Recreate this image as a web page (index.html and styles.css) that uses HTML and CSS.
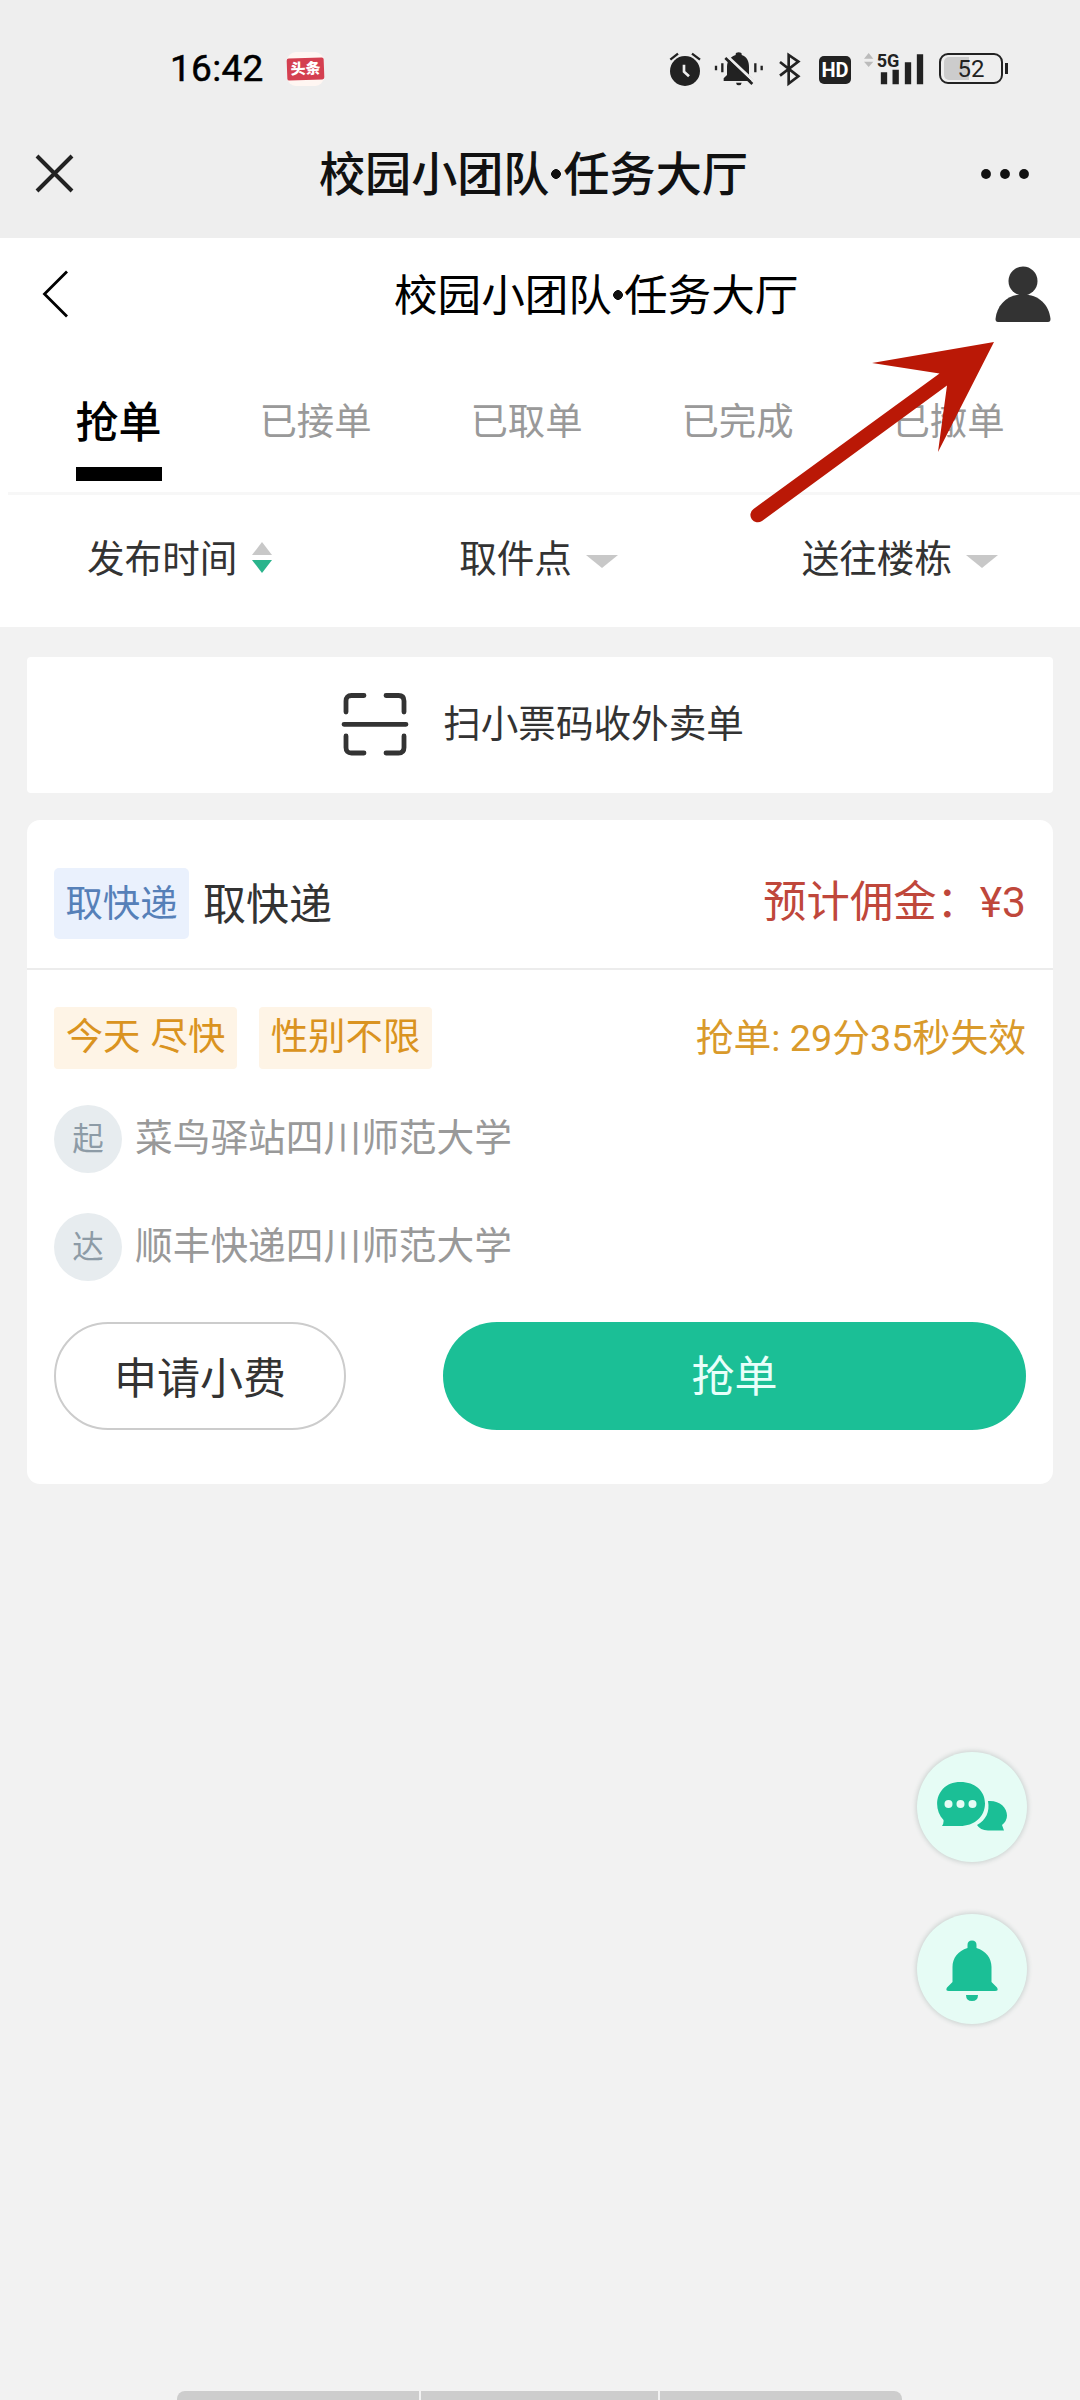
FILE: index.html
```html
<!DOCTYPE html>
<html lang="zh-CN">
<head>
<meta charset="utf-8">
<title>校园小团队•任务大厅</title>
<link rel="stylesheet" href="styles.css">
</head>
<body>
<div class="screen">
  <header class="host">
    <div class="status">
      <span class="clock">16:42</span>
      <span class="app-badge"><span class="app-badge-label">头条</span></span>
      <div class="status-icons">
        <svg class="i-alarm" width="34" height="36" viewBox="84 62 102 108">
          <circle cx="135" cy="122" r="45" fill="#222"/>
          <path d="M91 88 L114 70 M156 70 L180 88" stroke="#222" stroke-width="7" fill="none"/>
          <path d="M132 103 V124 L147 138" stroke="#eee" stroke-width="8" fill="none"/>
        </svg>
        <svg class="i-mute" width="50" height="36" viewBox="222 62 150 108">
          <path d="M228 106v14M247 99v27M346 99v27M365 106v14" stroke="#222" stroke-width="7"/>
          <path d="M251 152 v-8 l10-10 v-24 c0-18 10-31 26-36 v-3 q0-5 9-5 t9 5 v3 c16 5 22 19 22 36 v24 l14 14 v4z" fill="#222"/>
          <path d="M288 157h17q-1 8-8.500 8t-8.500-8z" fill="#222"/>
          <path d="M261 77 L345 156" stroke="#eee" stroke-width="9"/>
          <path d="M256 83 L337 161" stroke="#222" stroke-width="8"/>
        </svg>
        <svg class="i-bt" width="24" height="36" viewBox="413 62 72 108">
          <path d="M419 95 L474 138 L445 160 V74 L474 94 L419 136" stroke="#222" stroke-width="8" fill="none"/>
        </svg>
        <span class="hd">HD</span>
        <svg class="i-signal" width="62" height="36" viewBox="668 62 186 108">
          <path d="M671 85 L685 68 L699 85z M671 94 L685 110 L699 94z" fill="#bbb"/>
          <path d="M731 126v36M766 118v44M803 96v66M839 72v90" stroke="#222" stroke-width="19"/>
          <text x="709" y="110" class="net" textLength="68" lengthAdjust="spacingAndGlyphs">5G</text>
        </svg>
        <span class="battery"><span class="battery-fill"></span><span class="battery-num">52</span></span>
      </div>
    </div>
    <div class="host-bar">
      <svg class="close" width="41" height="41" viewBox="0 0 41 41"><path d="M3 3 L38 38 M38 3 L3 38" stroke="#222" stroke-width="4"/></svg>
      <h1 class="host-title">校园小团队<i class="dot"></i>任务大厅</h1>
      <svg class="more" width="50" height="12" viewBox="0 0 50 12" fill="#111"><circle cx="6" cy="6" r="4.900"/><circle cx="25" cy="6" r="4.900"/><circle cx="44" cy="6" r="4.900"/></svg>
    </div>
  </header>

  <section class="top">
    <div class="nav">
      <svg class="back" width="28" height="50" viewBox="0 0 28 50"><path d="M25 2.500 L2.500 25 L25 47.500" stroke="#000" stroke-width="2.800" fill="none"/></svg>
      <h2 class="nav-title">校园小团队<i class="dot"></i>任务大厅</h2>
      <svg class="user" width="56" height="60" viewBox="0 0 56 60" fill="#333"><circle cx="28" cy="16" r="14.500"/><path d="M.500 54 C2 40 12 29.500 28 29.500 S54 40 55.500 54 Q55.500 57 53 57 H3 Q.500 57 .500 54z"/></svg>
    </div>
    <nav class="tabs">
      <span class="tab active">抢单</span>
      <span class="tab">已接单</span>
      <span class="tab">已取单</span>
      <span class="tab">已完成</span>
      <span class="tab">已撤单</span>
    </nav>
    <div class="filters">
      <span class="filter">发布时间<svg class="sort" width="20" height="32" viewBox="0 0 20 32"><path d="M0 13 L10 0 L20 13z" fill="#c8c8c8"/><path d="M0 18 L10 31 L20 18z" fill="#2ab48c"/></svg></span>
      <span class="filter middle">取件点<svg class="caret" width="32" height="13" viewBox="0 0 32 13"><path d="M0 0H32L16 13z" fill="#c8c8c8"/></svg></span>
      <span class="filter">送往楼栋<svg class="caret" width="32" height="13" viewBox="0 0 32 13"><path d="M0 0H32L16 13z" fill="#c8c8c8"/></svg></span>
    </div>
  </section>

  <main class="content">
    <div class="scan">
      <svg width="68" height="66" viewBox="0 0 68 66" fill="none" stroke="#333" stroke-width="4.800" stroke-linecap="round"><path d="M5 20V9Q5 3.500 10.500 3.500H23M45 3.500H57.500Q63 3.500 63 9V20M63 44V55.500Q63 61 57.500 61H45M23 61H10.500Q5 61 5 55.500V44M3 32.300H65"/></svg>
      <span>扫小票码收外卖单</span>
    </div>

    <article class="card">
      <div class="card-head">
        <span class="type">取快递</span>
        <span class="name">取快递</span>
        <span class="fee">预计佣金：<span class="amount">¥3</span></span>
      </div>
      <div class="tags">
        <span class="tag">今天<i class="sp"></i>尽快</span>
        <span class="tag second">性别不限</span>
        <span class="countdown">抢单: 29分35秒失效</span>
      </div>
      <div class="route"><span class="pin">起</span><span>菜鸟驿站四川师范大学</span></div>
      <div class="route"><span class="pin">达</span><span>顺丰快递四川师范大学</span></div>
      <div class="actions">
        <button class="ghost">申请小费</button>
        <button class="grab">抢单</button>
      </div>
    </article>
  </main>

  <svg class="arrow" width="250" height="190" viewBox="750 336 250 190" fill="#ba1806"><path d="M994 342 L872 363 L939.500 373.500 L753.500 509 A7 7 0 0 0 762 521 L947 385.500 L938 452z"/></svg>

  <div class="floats">
    <span class="float"><svg width="74" height="52" viewBox="0 0 74 52" fill="#1bbf96">
      <path d="M7 45 Q9 42 8.500 39 C-4 26 2 1 25.500 1 C40 1 50 10 50 22.500 C50 36 39 45 25 45z"/>
      <path d="M53 20 C64 19 72 26 72 34.500 Q72 40 67 44 L69 49.500 H53 Q45 49 42 44 C51 39 55 31 53 20z"/>
      <g fill="#e6fcf5"><circle cx="13.500" cy="23" r="4"/><circle cx="25.500" cy="23" r="4"/><circle cx="37.500" cy="23" r="4"/></g></svg></span>
    <span class="float"><svg class="bell" width="54" height="64" viewBox="0 0 54 64" fill="#1bbf96">
      <path d="M22.500 9 V6 Q22.500 1.500 27 1.500 T31.500 6 V9 C41 12 46.500 19 46.500 28 V43 L52 48.500 Q54 52 50 52 H4 Q0 52 2 48.500 L7.500 43 V28 C7.500 19 13 12 22.500 9z"/><path d="M21 56H33Q33 62 27 62T21 56z"/></svg></span>
  </div>

  <div class="bottom-bar"><i></i><i></i><i></i></div>
</div>
</body>
</html>
```
FILE: styles.css
```css
* { box-sizing: border-box; margin: 0; padding: 0; }
body { background: #f2f2f2; font-family: "Noto Sans CJK SC", sans-serif; color: #333; }
svg { display: block; flex: none; }
i { font-style: normal; }
.screen { position: relative; width: 1080px; height: 2400px; overflow: hidden; display: flex; flex-direction: column; background: #f2f2f2; white-space: nowrap; }

.host { height: 238px; background: #eee; }
.status { height: 137px; padding: 0 72px 0 170px; display: flex; align-items: center; }
.clock { width: 117px; font: 400 37px/40px Roboto, sans-serif; color: #000; letter-spacing: .3px; -webkit-text-stroke: .5px #000; }
.app-badge { width: 37px; height: 34px; border-radius: 9px; background: #fff6f2; display: flex; align-items: center; }
.app-badge-label { width: 37px; height: 22px; border-radius: 2px; background: #d43f50; color: #fff; font-size: 15px; font-weight: 900; line-height: 20px; text-align: center; transform: rotate(-2deg); }
.status-icons { margin-left: auto; display: flex; align-items: center; }
.i-mute { margin-left: 12px; }
.i-bt { margin-left: 14px; }
.hd { margin-left: 17px; width: 32px; height: 28px; margin-top: 2px; border-radius: 5px; background: #222; color: #fff; font: 700 20px/28px Roboto, sans-serif; text-align: center; }
.i-signal { margin-left: 12px; }
.net { font: 700 56px Roboto, sans-serif; fill: #222; stroke: #eee; stroke-width: 8px; paint-order: stroke; }
.battery { position: relative; margin-left: 14px; margin-right: 5px; width: 64px; height: 31px; border: 2px solid #222; border-radius: 9px; display: flex; align-items: center; justify-content: center; }
.battery::after { content: ""; position: absolute; right: -7px; top: 8px; width: 3px; height: 11px; background: #222; }
.battery-fill { position: absolute; left: 3px; top: 2px; bottom: 2px; width: 25px; background: #ccc; border-radius: 5px 0 0 5px; }
.battery-num { position: relative; font: 400 24px/26px Roboto, sans-serif; color: #222; }
.host-bar { height: 73px; padding: 0 50px 0 34px; display: flex; align-items: center; }
.host-title { margin: 0 0 5px 244px; font-size: 46.100px; font-weight: 500; line-height: 66px; color: #111; }
.dot { display: inline-block; width: 14px; height: .23em; vertical-align: .25em; background: radial-gradient(circle closest-side, #111 92%, transparent); }
.more { margin-left: auto; }

.top { height: 389px; background: #fff; }
.nav { height: 112px; padding: 0 29px 0 42px; display: flex; align-items: center; }
.nav-title { margin: 0 0 5px 324px; font-size: 43.600px; font-weight: 400; line-height: 60px; color: #000; }
.nav-title .dot { width: 12px; }
.user { margin-left: auto; margin-top: 2px; }
.tabs { height: 145px; margin-left: 8px; padding-left: 19px; display: grid; grid-template-columns: 183px 211px 211px 211px 211px; border-bottom: 3px solid #f7f7f7; }
.tab { font-size: 37.400px; line-height: 54px; padding-top: 42px; text-align: center; color: #999; }
.active { font-size: 43px; font-weight: 500; color: #000; }
.active::after { content: ""; display: block; width: 86px; height: 14px; margin: 21px auto 0; background: #000; }
.filters { padding: 34px 82px 0 87px; display: flex; justify-content: space-between; }
.filter { display: flex; align-items: center; font-size: 37.600px; line-height: 54px; }
.middle { padding-left: 3px; }
.sort { margin: 4px 0 0 15px; }
.caret { margin-left: 14px; margin-top: 10px; }

.content { padding: 30px 27px 0; display: flex; flex-direction: column; gap: 27px; }
.scan { height: 136px; background: #fff; border-radius: 4px; display: flex; align-items: center; justify-content: center; gap: 34px; padding-left: 5px; font-size: 37.600px; line-height: 54px; }
.scan span { margin-bottom: 9px; }
.card { height: 664px; background: #fff; border-radius: 13px; padding: 0 27px; }
.card-head { height: 150px; margin: 0 -27px; padding: 18px 27px 0; border-bottom: 2px solid #ececec; display: flex; align-items: center; }
.type { width: 135px; height: 71px; border-radius: 5px; background: #eaf1fd; color: #5680b8; font-size: 37.400px; line-height: 66px; text-align: center; }
.name { margin-left: 14px; font-size: 43px; line-height: 60px; margin-bottom: 4px; }
.fee { margin-left: auto; font-size: 43.300px; line-height: 60px; color: #bf473b; margin-bottom: 6px; }
.amount { font-family: Roboto, sans-serif; font-size: 42.500px; }
.tags { height: 62px; margin-top: 37px; display: flex; align-items: center; }
.tag { height: 62px; width: 183px; background: #fef4e6; border-radius: 4px; color: #da9320; font-size: 37.400px; line-height: 54px; text-align: center; }
.second { width: 173px; margin-left: 22px; }
.sp { display: inline-block; width: 10px; }
.countdown { margin-left: auto; font-family: Roboto, "Noto Sans CJK SC", sans-serif; font-size: 37.800px; line-height: 56px; color: #d99a2b; }
.route { margin-top: 36px; height: 68px; display: flex; align-items: center; gap: 13px; font-size: 37.700px; line-height: 60px; color: #999; }
.route span:last-child { margin-bottom: 9px; }
.route + .route { margin-top: 40px; }
.route .pin { width: 68px; height: 68px; border-radius: 50%; background: #e7ecef; color: #8d9ba6; font-size: 31.500px; line-height: 63px; text-align: center; }
.actions { margin-top: 41px; display: flex; justify-content: space-between; }
button { height: 108px; border: 0; border-radius: 54px; font: 400 43px/100px "Noto Sans CJK SC", sans-serif; padding-bottom: 2px; }
.ghost { width: 292px; background: #fff; border: 2px solid #ccc; color: #333; }
.grab { width: 583px; background: #1bbf96; color: #e8fffa; padding-bottom: 6px; }

.arrow { position: absolute; left: 750px; top: 336px; }
.floats { position: absolute; left: 917px; top: 1752px; display: grid; gap: 52px; }
.float { width: 110px; height: 110px; border-radius: 50%; background: #e6fcf5; box-shadow: 0 0 4px 1.500px #cfd6d4; display: flex; align-items: center; justify-content: center; }
.bell { margin-top: 3px; }
.bottom-bar { margin: auto 178px 0 177px; height: 9px; display: grid; grid-template-columns: 242px 237px 1fr; gap: 2px; border-radius: 8px 8px 0 0; overflow: hidden; }
.bottom-bar i { background: #cdcdcd; }
```
